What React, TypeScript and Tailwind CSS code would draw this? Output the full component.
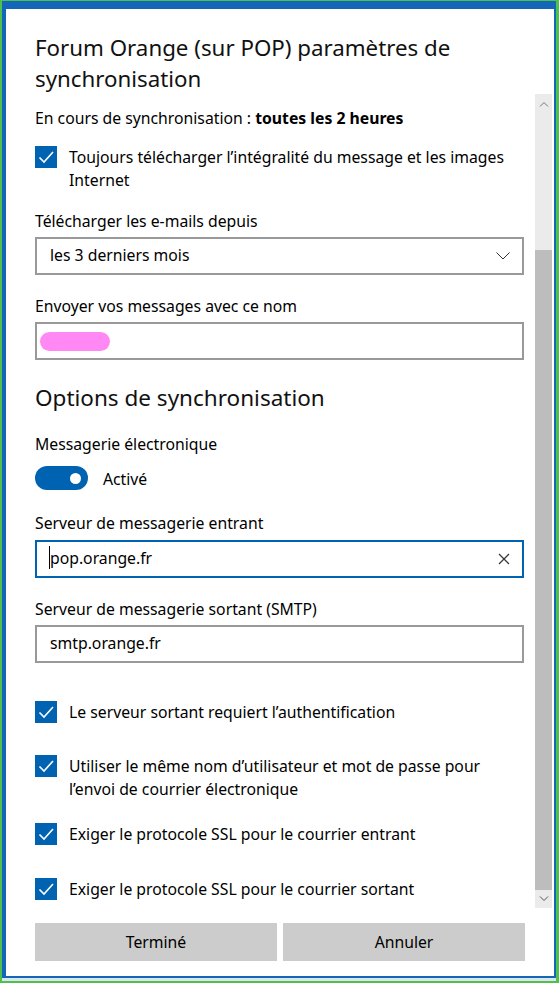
import React from 'react';

const font = { fontFamily: '"Noto Sans", "Open Sans", Arial, sans-serif' };

function CheckBox() {
  return (
    <div className="mt-[1px] flex h-[22px] w-[22px] shrink-0 items-center justify-center bg-[#0063b1]">
      <svg width="18" height="18" viewBox="0 0 18 18" fill="none">
        <polyline points="2.5,9.5 7,14 16,4" stroke="white" strokeWidth="1.6" />
      </svg>
    </div>
  );
}

function CheckRow({ className, children }: { className?: string; children: React.ReactNode }) {
  return (
    <div className={'flex items-start gap-[12px] ' + (className ?? '')}>
      <CheckBox />
      <div className="relative top-[1px] leading-[23px]">{children}</div>
    </div>
  );
}

function Label({ className, children }: { className?: string; children: React.ReactNode }) {
  return <div className={'leading-[23px] ' + (className ?? '')}>{children}</div>;
}

function Scrollbar() {
  return (
    <div className="flex w-[17px] shrink-0 flex-col bg-[#ebebeb]">
      <div className="flex h-[19px] items-center justify-center">
        <svg width="10" height="6" viewBox="0 0 10 6" fill="none">
          <polyline points="1,5.5 5,1.5 9,5.5" stroke="#777" strokeWidth="1" />
        </svg>
      </div>
      <div className="h-[137px]" />
      <div className="flex-1 bg-[#bdbdbd]" />
      <div className="flex h-[18px] items-center justify-center">
        <svg width="10" height="6" viewBox="0 0 10 6" fill="none">
          <polyline points="1,0.5 5,4.5 9,0.5" stroke="#555" strokeWidth="1" />
        </svg>
      </div>
    </div>
  );
}

export default function App() {
  return (
    <div className="flex h-[983px] w-[559px] flex-col bg-[#4cc24c] pb-[2px] pl-[2px] pr-[3px] pt-[1px]" style={font}>
      <div className="flex flex-1 flex-col border-b-[2px] border-l-[4px] border-r-[2px] border-t-[8px] border-[#1466b8] bg-white text-[15.75px] text-black">
        <div className="pl-[29px] pt-[23px] text-[22.3px] leading-[31px] text-[#111]">
          Forum Orange (sur POP) paramètres de
          <br />
          synchronisation
        </div>

        <div className="flex h-[814px]">
          <div className="flex w-[489px] flex-col pl-[29px] box-content">
            <Label className="mt-[13px]">
              En cours de synchronisation : <span className="font-bold">toutes les 2 heures</span>
            </Label>
            <CheckRow className="mt-[15px]">
              Toujours télécharger l’intégralité du message et les images
              <br />
              Internet
            </CheckRow>

            <Label className="mt-[19px]">Télécharger les e-mails depuis</Label>
            <div className="mt-[4px] flex h-[38px] items-center justify-between border-2 border-[#999] pl-[13px] pr-[12px]">
              <span>les 3 derniers mois</span>
              <svg width="14" height="8" viewBox="0 0 14 8" fill="none">
                <polyline points="0.5,0.5 7,7 13.5,0.5" stroke="#333" strokeWidth="1" />
              </svg>
            </div>

            <Label className="mt-[20px]">Envoyer vos messages avec ce nom</Label>
            <div className="mt-[4px] flex h-[38px] items-center border-2 border-[#999] pl-[3px]">
              <div className="h-[19px] w-[70px] rounded-full bg-[#ff88f4]" />
            </div>

            <div className="mt-[22px] text-[22.5px] leading-[31px] text-[#111]">Options de synchronisation</div>

            <Label className="mt-[20px]">Messagerie électronique</Label>
            <div className="mt-[10px] flex items-center gap-[15px]">
              <div className="flex h-[24px] w-[53px] items-center justify-end rounded-full bg-[#0063b1] pr-[7px]">
                <div className="h-[11px] w-[11px] rounded-full bg-white" />
              </div>
              <span className="relative top-[1px] leading-[23px]">Activé</span>
            </div>

            <Label className="mt-[22px]">Serveur de messagerie entrant</Label>
            <div className="mt-[5px] flex h-[38px] items-center justify-between border-2 border-[#0063b1] pl-[13px] pr-[12px]">
              <span className="relative">
                <span className="absolute left-[-1px] top-[-1px] h-[23px] w-[1px] bg-black" />
                pop.orange.fr
              </span>
              <svg width="12" height="12" viewBox="0 0 12 12" fill="none">
                <path d="M1 1 L11 11 M11 1 L1 11" stroke="#333" strokeWidth="1.2" />
              </svg>
            </div>

            <Label className="mt-[20px]">Serveur de messagerie sortant (SMTP)</Label>
            <div className="mt-[4px] flex h-[38px] items-center border-2 border-[#999] pl-[13px]">
              smtp.orange.fr
            </div>

            <CheckRow className="mt-[37px]">Le serveur sortant requiert l’authentification</CheckRow>
            <CheckRow className="mt-[31px]">
              Utiliser le même nom d’utilisateur et mot de passe pour
              <br />
              l’envoi de courrier électronique
            </CheckRow>
            <CheckRow className="mt-[22px]">Exiger le protocole SSL pour le courrier entrant</CheckRow>
            <CheckRow className="mt-[32px]">Exiger le protocole SSL pour le courrier sortant</CheckRow>
          </div>
          <div className="w-[11px]" />
          <Scrollbar />
        </div>

        <div className="mt-[15px] flex gap-[6px] pl-[29px] pr-[29px]">
          <button className="h-[38px] flex-1 bg-[#cccccc] pt-[2px] text-[15.75px] text-black">Terminé</button>
          <button className="h-[38px] flex-1 bg-[#cccccc] pt-[2px] text-[15.75px] text-black">Annuler</button>
        </div>
      </div>
      <div className="h-[3px] bg-[#dce4ec]" />
    </div>
  );
}
